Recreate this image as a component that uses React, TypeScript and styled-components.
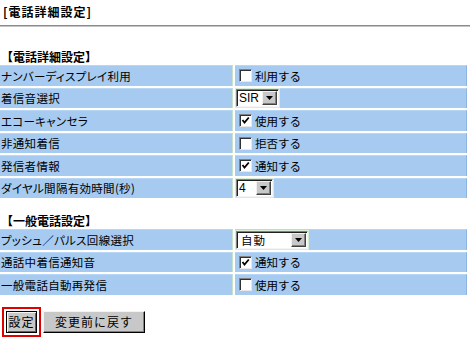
import React from "react";
import styled, { createGlobalStyle } from "styled-components";

const Global = createGlobalStyle`
  html, body { margin: 0; padding: 0; background: #fff; }
  body { font-family: "Noto Sans CJK JP", "Liberation Sans", sans-serif; color: #000; }
`;

const Page = styled.div`
  width: 470px;
  display: flex;
  flex-direction: column;
`;

const Title = styled.div`
  height: 20px;
  padding: 2px 0 0 3px;
  font-size: 12px;
  line-height: 20px;
  font-weight: bold;
  letter-spacing: 1px;
`;

const Rule = styled.div`
  margin-top: 3px;
  height: 1px;
  border-top: 1px solid #8c8c8c;
  background: #c4c4c4;
`;

const SectionHeading = styled.div<{ $top: number }>`
  margin-top: ${(p) => p.$top}px;
  padding-left: 1px;
  height: 14px;
  font-size: 12px;
  line-height: 14px;
  font-weight: bold;
  margin-bottom: 1px;
`;

const Grid = styled.div`
  width: 467px;
  display: grid;
  grid-template-columns: 233px 232px;
  grid-auto-rows: 20.5px;
  column-gap: 2px;
  row-gap: 2px;
`;

const LabelCell = styled.div`
  background: #a6caf0;
  border-top: 1px solid #b8d6f6;
  border-right: 1px solid #c8e4c8;
  padding-left: 1px;
  display: flex;
  align-items: center;
  font-family: "Noto Sans CJK JP", sans-serif;
  font-size: 11.5px;
  white-space: nowrap;
  font-feature-settings: "palt" 1;
  letter-spacing: 0.3px;
`;

const ValueCell = styled.div`
  background: #a6caf0;
  border-top: 1px solid #b8d6f6;
  border-right: 1px solid #8fb4e0;
  display: flex;
  align-items: center;
  font-size: 11.5px;
  white-space: nowrap;
`;

const CheckLabel = styled.label`
  display: flex;
  align-items: center;
  gap: 3px;
  margin-left: 4px;
`;

const Box = styled.span`
  width: 13px;
  height: 13px;
  box-sizing: border-box;
  background: #fff;
  border: 1px solid;
  border-color: #808080 #e8e8e8 #e8e8e8 #808080;
  box-shadow: inset 1px 1px 0 #303030;
  display: flex;
  align-items: center;
  justify-content: center;
`;

const Check = ({ on, label }: { on: boolean; label: string }) => (
  <CheckLabel>
    <Box>
      {on && (
        <svg width="9" height="9" viewBox="0 0 9 9">
          <path d="M1.5 4 L3.5 6.5 L7.8 1.5" stroke="#000" strokeWidth="1.8" fill="none" />
        </svg>
      )}
    </Box>
    <span>{label}</span>
  </CheckLabel>
);

const SelectBox = styled.div<{ $w: number }>`
  width: ${(p) => p.$w}px;
  height: 18px;
  box-sizing: border-box;
  margin-left: 1px;
  background: #fff;
  border: 1px solid;
  border-color: #808080 #f4f4f4 #f4f4f4 #808080;
  box-shadow: inset 1px 1px 0 #202020, 0 0 0 1px #d8ecd8;
  display: flex;
  align-items: stretch;
  justify-content: space-between;
  padding: 1px 1px 1px 2px;
`;

const SelectText = styled.span`
  font-size: 12px;
  line-height: 14px;
  font-family: "Liberation Sans", "Noto Sans CJK JP", sans-serif;
`;

const SelectJa = styled(SelectText)`
  font-family: "Noto Sans CJK JP", sans-serif;
  font-size: 11.5px;
  padding-left: 2px;
  letter-spacing: 1px;
`;

const DropBtn = styled.span`
  width: 15px;
  box-sizing: border-box;
  background: #c8c8c8;
  border: 1px solid;
  border-color: #f0f0f0 #404040 #404040 #f0f0f0;
  box-shadow: inset -1px -1px 0 #808080;
  display: flex;
  align-items: center;
  justify-content: center;
`;

const Arrow = () => (
  <svg width="7" height="4" viewBox="0 0 7 4">
    <path d="M0 0 H7 L3.5 4 Z" fill="#000" />
  </svg>
);

const Select = ({ w, text, ja }: { w: number; text: string; ja?: boolean }) => (
  <SelectBox $w={w}>
    {ja ? <SelectJa>{text}</SelectJa> : <SelectText>{text}</SelectText>}
    <DropBtn>
      <Arrow />
    </DropBtn>
  </SelectBox>
);

const Buttons = styled.div`
  margin-top: 12px;
  padding-left: 2px;
  display: flex;
  align-items: center;
  gap: 2px;
`;

const Highlight = styled.div`
  border: 2px solid #e00000;
  padding: 2px;
  display: flex;
`;

const Btn = styled.button<{ $w: number; $default?: boolean }>`
  width: ${(p) => p.$w}px;
  height: 22px;
  box-sizing: border-box;
  margin: 0;
  padding: 0;
  background: #c8c8c8;
  font-family: "Noto Sans CJK JP", sans-serif;
  font-size: 12px;
  line-height: 18px;
  color: #000;
  border: 1px solid;
  border-color: ${(p) => (p.$default ? "#000" : "#f4f4f4 #000 #000 #f4f4f4")};
  box-shadow: ${(p) =>
    p.$default
      ? "inset 1px 1px 0 #f4f4f4, inset -1px -1px 0 #606060"
      : "inset -1px -1px 0 #808080"};
  letter-spacing: 1px;
`;

const rows1: [string, React.ReactNode][] = [
  ["ナンバーディスプレイ利用", <Check on={false} label="利用する" />],
  ["着信音選択", <Select w={43} text="SIR" />],
  ["エコーキャンセラ", <Check on label="使用する" />],
  ["非通知着信", <Check on={false} label="拒否する" />],
  ["発信者情報", <Check on label="通知する" />],
  ["ダイヤル間隔有効時間(秒)", <Select w={37} text="4" />],
];

const rows2: [string, React.ReactNode][] = [
  ["プッシュ／パルス回線選択", <Select w={72} text="自動" ja />],
  ["通話中着信通知音", <Check on label="通知する" />],
  ["一般電話自動再発信", <Check on={false} label="使用する" />],
];

const Table = ({ rows }: { rows: [string, React.ReactNode][] }) => (
  <Grid>
    {rows.map(([l, v], i) => (
      <React.Fragment key={i}>
        <LabelCell>{l}</LabelCell>
        <ValueCell>{v}</ValueCell>
      </React.Fragment>
    ))}
  </Grid>
);

export default function App() {
  return (
    <Page>
      <Global />
      <Title>[電話詳細設定]</Title>
      <Rule />
      <SectionHeading $top={23}>【電話詳細設定】</SectionHeading>
      <Table rows={rows1} />
      <SectionHeading $top={16}>【一般電話設定】</SectionHeading>
      <Table rows={rows2} />
      <Buttons>
        <Highlight>
          <Btn $w={31} $default>設定</Btn>
        </Highlight>
        <Btn $w={102}>変更前に戻す</Btn>
      </Buttons>
    </Page>
  );
}
